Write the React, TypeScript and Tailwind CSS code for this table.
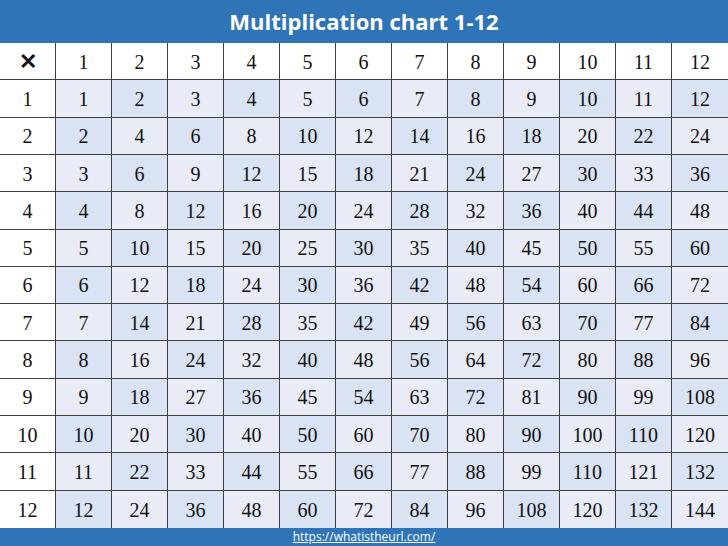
const nums = Array.from({ length: 12 }, (_, i) => i + 1);

function Cell({
  row,
  col,
  children,
}: {
  row: number;
  col: number;
  children: React.ReactNode;
}) {
  // row 0 = header row, col 0 = label column
  let bg = "bg-white";
  if (row > 0 && col > 0) {
    bg = (row + col) % 2 === 0 ? "bg-[#e9ecf6]" : "bg-[#dae3f3]";
  }
  const borderR = col < 12 ? "border-r-[1.5px]" : "";
  const borderB = row < 12 ? "border-b-[1.5px]" : "";
  return (
    <div
      className={`flex items-center justify-center border-[#3f3f3f] pt-px text-[20px] leading-none text-[#111] ${bg} ${borderR} ${borderB}`}
    >
      {children}
    </div>
  );
}

export default function App() {
  const rows = [0, ...nums];
  const cols = [0, ...nums];

  return (
    <div
      className="flex h-[546px] w-[728px] flex-col bg-white"
      style={{ fontFamily: '"Liberation Serif", "DejaVu Serif", serif' }}
    >
      {/* Title */}
      <div className="flex h-[43px] items-center justify-center bg-[#2e74b6]">
        <h1 className="font-['Open_Sans',sans-serif] text-[22px] font-bold text-white">
          Multiplication chart 1-12
        </h1>
      </div>

      {/* Chart */}
      <div className="grid h-[485px] grid-cols-[repeat(13,56px)] grid-rows-[repeat(13,1fr)]">
        {rows.map((r) =>
          cols.map((c) => {
            let content: React.ReactNode;
            if (r === 0 && c === 0) {
              content = (
                <span className="font-['Liberation_Sans',sans-serif] text-[22px] font-bold">
                  ✕
                </span>
              );
            } else if (r === 0) {
              content = c;
            } else if (c === 0) {
              content = r;
            } else {
              content = r * c;
            }
            return (
              <Cell key={`${r}-${c}`} row={r} col={c}>
                {content}
              </Cell>
            );
          })
        )}
      </div>

      {/* Footer */}
      <div className="flex flex-1 items-center justify-center bg-[#2e74b6]">
        <a
          href="#"
          className="font-['Open_Sans',sans-serif] text-[12px] leading-none text-white underline"
        >
          https://whatistheurl.com/
        </a>
      </div>
    </div>
  );
}
